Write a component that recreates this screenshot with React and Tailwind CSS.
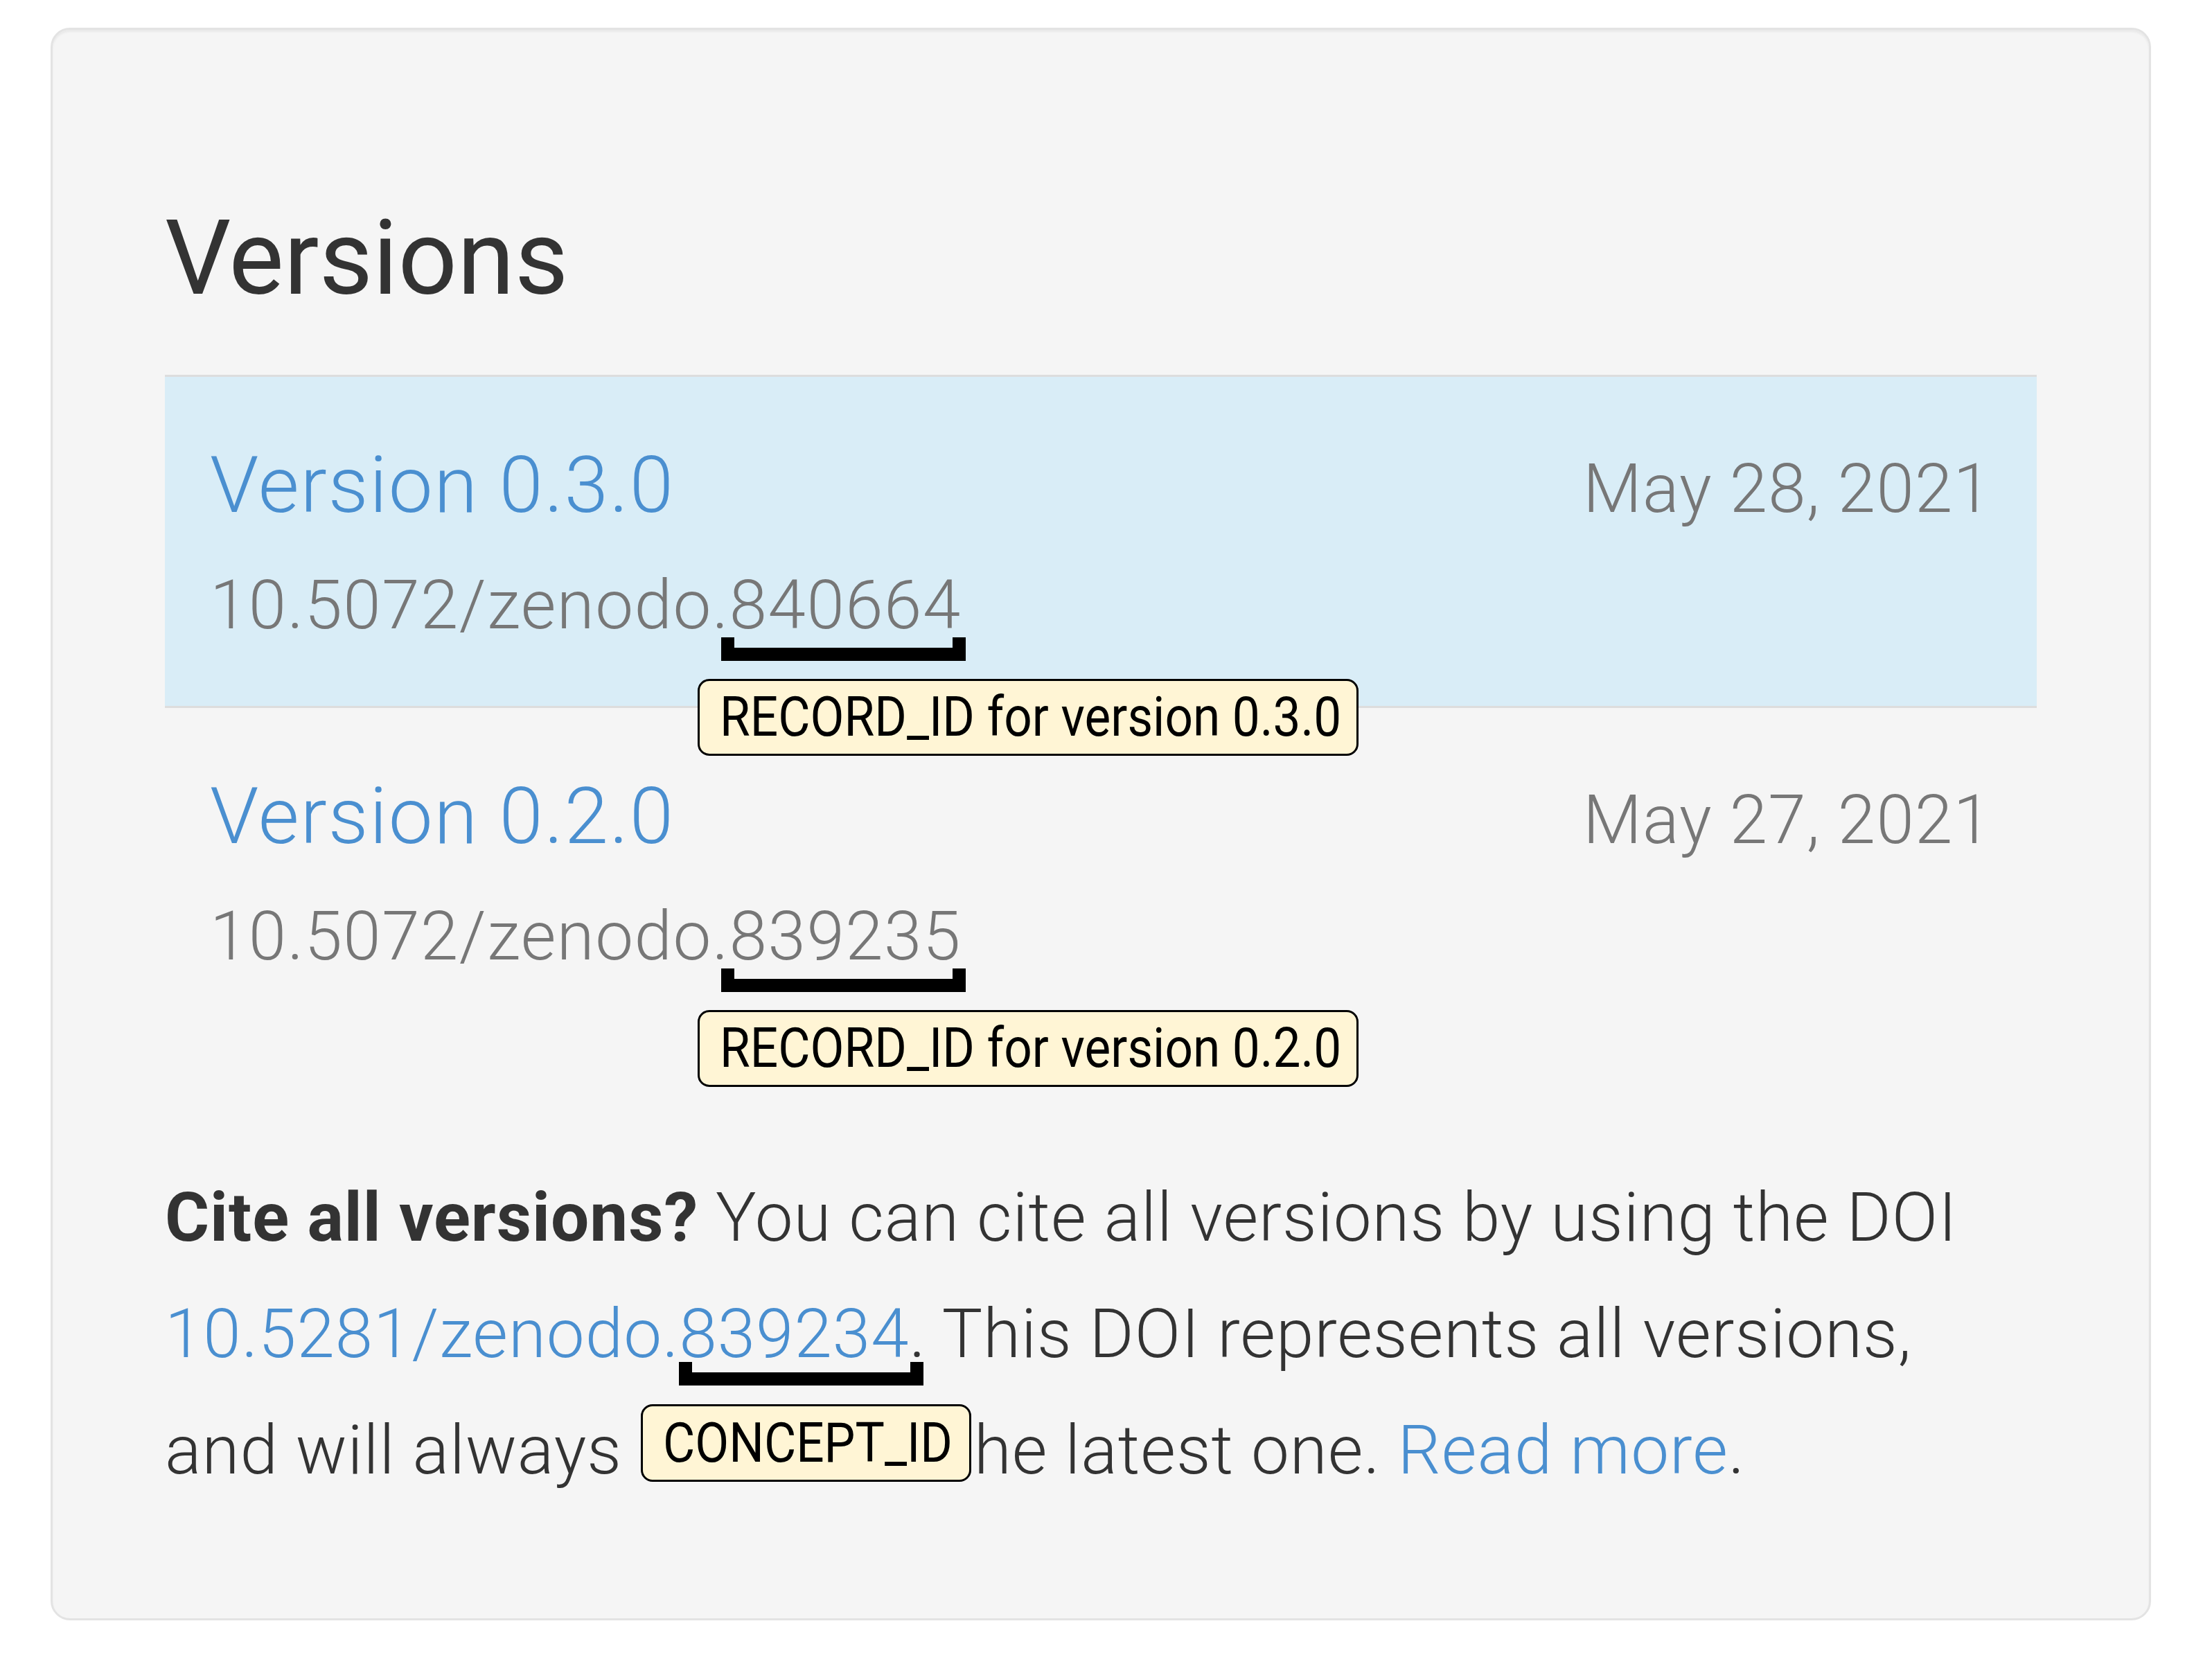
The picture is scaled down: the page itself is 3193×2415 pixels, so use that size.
const linkBlue = 'text-[#4a8fd0]';
const light = "font-['Roboto_Light','Roboto',sans-serif] font-light";

function Bracket({ className }) {
  return (
    <span
      className={`absolute block h-[34px] w-[353px] border-x-[19px] border-b-[19px] border-black ${className}`}
    />
  );
}

function Note({ children, className }) {
  return (
    <span
      className={`absolute flex items-center whitespace-nowrap rounded-[17px] border-[3px] border-black bg-[#fff5d5] pl-[29px] tracking-normal ${className}`}
    >
      <span className="inline-block origin-left scale-x-[0.9] font-['Roboto',sans-serif] text-[79px] font-normal leading-none text-black">
        {children}
      </span>
    </span>
  );
}

function VersionRow({ title, date, prefix, recordId, highlight }) {
  return (
    <div
      className={`border-t-[3px] border-[#dddddd] pt-[89px] pb-[88px] pl-[65px] pr-[65px] ${
        highlight ? 'bg-[#d9edf7]' : ''
      }`}
    >
      <div className="flex items-baseline justify-between">
        <a className={`${light} text-[114px] leading-[134px] tracking-[0.016em] ${linkBlue}`}>{title}</a>
        <span className={`${light} text-[98px] leading-[115px] tracking-[0.012em] text-[#777777]`}>{date}</span>
      </div>
      <div className={`${light} mt-[49px] text-[98px] leading-[115px] tracking-[0.015em] text-[#777777]`}>
        {prefix}
        <span className="relative">
          {recordId}
          <Bracket className="left-[-12px] top-[104px]" />
          <Note className="left-[-46px] top-[164px] h-[111px] w-[954px]">
            RECORD_ID for {title.toLowerCase()}
          </Note>
        </span>
      </div>
    </div>
  );
}

export default function App() {
  return (
    <div className="min-h-screen bg-white pt-[40px] pl-[73px] font-['Roboto',sans-serif]">
      <div className="w-[3032px] rounded-[28px] border-[3px] border-[#e3e3e3] bg-[#f5f5f5] px-[162px] pt-[248px] pb-[158px] shadow-[inset_0_3px_3px_rgba(0,0,0,0.05)]">
        <h2 className="mb-[85px] text-[150px] font-normal leading-[165px] text-[#333333]">Versions</h2>

        <div>
          <VersionRow
            title="Version 0.3.0"
            date="May 28, 2021"
            prefix="10.5072/zenodo."
            recordId="840664"
            highlight
          />
          <VersionRow
            title="Version 0.2.0"
            date="May 27, 2021"
            prefix="10.5072/zenodo."
            recordId="839235"
          />
        </div>

        <p className={`${light} mt-[177px] text-[98px] leading-[168px] tracking-[0.01em] text-[#333333]`}>
          <strong className="font-['Roboto',sans-serif] font-bold">Cite all versions?</strong> You can cite all
          versions by using the DOI
          <br />
          <a className={linkBlue}>
            10.5281/zenodo.
            <span className="relative">
              839234
              <Bracket className="left-0 top-[98px]" />
              <Note className="left-[-55px] top-[159px] h-[112px] w-[477px]">CONCEPT_ID</Note>
            </span>
          </a>
          . This DOI represents all versions,
          <br />
          and will always resolve to the latest one. <a className={linkBlue}>Read more</a>.
        </p>
      </div>
    </div>
  );
}
